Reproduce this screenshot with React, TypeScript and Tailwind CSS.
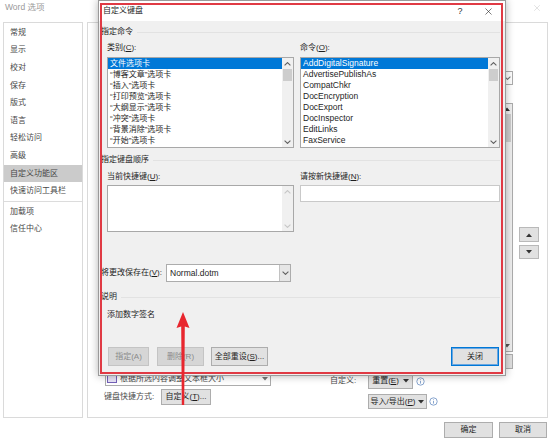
import React from "react";
import { X } from "lucide-react";

const ChevUp = ({ c = "#606060" }: { c?: string }) => (
  <svg width="7" height="4" viewBox="0 0 7 4">
    <polyline points="0.6,3.4 3.5,0.6 6.4,3.4" fill="none" stroke={c} strokeWidth="1.1" />
  </svg>
);
const ChevDown = ({ c = "#606060" }: { c?: string }) => (
  <svg width="7" height="4" viewBox="0 0 7 4">
    <polyline points="0.6,0.6 3.5,3.4 6.4,0.6" fill="none" stroke={c} strokeWidth="1.1" />
  </svg>
);
const TriUp = () => (
  <svg width="6" height="4" viewBox="0 0 6 4">
    <polygon points="0,4 3,0.5 6,4" fill="#333" />
  </svg>
);
const TriDown = ({ c = "#333" }: { c?: string }) => (
  <svg width="6" height="4" viewBox="0 0 6 4">
    <polygon points="0,0 6,0 3,3.5" fill={c} />
  </svg>
);
const Info = () => (
  <svg width="9" height="9" viewBox="0 0 9 9">
    <circle cx="4.5" cy="4.5" r="3.7" fill="none" stroke="#7b9bc8" strokeWidth="0.9" />
    <line x1="4.5" y1="4" x2="4.5" y2="6.6" stroke="#7b9bc8" strokeWidth="0.9" />
    <circle cx="4.5" cy="2.7" r="0.5" fill="#7b9bc8" />
  </svg>
);

function VScroll({ thumb, disabled }: { thumb?: boolean; disabled?: boolean }) {
  const c = disabled ? "#c6c6c6" : "#606060";
  return (
    <div className="w-[11px] h-full flex flex-col bg-[#f0f0f0] shrink-0">
      <div className="h-[11px] flex items-center justify-center">
        <ChevUp c={c} />
      </div>
      {thumb ? <div className="mx-[1px] h-[12px] bg-[#cdcdcd]" /> : null}
      <div className="flex-1" />
      <div className="h-[11px] flex items-center justify-center">
        <ChevDown c={c} />
      </div>
    </div>
  );
}

const cats = [
  "文件选项卡",
  "“博客文章”选项卡",
  "“插入”选项卡",
  "“打印预览”选项卡",
  "“大纲显示”选项卡",
  "“冲突”选项卡",
  "“背景消除”选项卡",
  "“开始”选项卡",
];
const cmds = [
  "AddDigitalSignature",
  "AdvertisePublishAs",
  "CompatChkr",
  "DocEncryption",
  "DocExport",
  "DocInspector",
  "EditLinks",
  "FaxService",
];

function ListBox({ items, latin }: { items: string[]; latin?: boolean }) {
  return (
    <div className="h-full bg-white border border-[#a8a8a8] flex">
      <div className={`flex-1 flex flex-col ${latin ? "text-[8.5px]" : ""}`}>
        {items.map((t, i) => (
          <div
            key={t}
            className={`h-[11px] shrink-0 flex items-center pl-[2px] whitespace-nowrap ${
              i === 0 ? "bg-[#0078d7] text-white" : ""
            }`}
          >
            {t}
          </div>
        ))}
      </div>
      <VScroll thumb />
    </div>
  );
}

function Header({ t, cls }: { t: string; cls: string }) {
  return (
    <div className={`flex items-center h-[12px] ${cls}`}>
      <span>{t}</span>
      <div className="flex-1 h-px bg-[#e2e2e2] ml-[4px]" />
    </div>
  );
}

function WinBtn({ children, cls, disabled }: { children?: React.ReactNode; cls: string; disabled?: boolean }) {
  return (
    <div
      className={`flex items-center justify-center border whitespace-nowrap ${
        disabled ? "bg-[#d6d6d6] border-[#c4c4c4] text-[#8a8a8a]" : "bg-[#e1e1e1] border-[#adadad] text-[#1e1e1e]"
      } ${cls}`}
    >
      {children}
    </div>
  );
}

function Dialog() {
  return (
    <div className="absolute left-[98px] top-0 w-[408px] h-[376px] border border-[#9a9a9a] bg-[#f0f0f0] shadow-[0_0_8px_rgba(0,0,0,0.3)] flex flex-col">
      <div className="h-[20px] bg-white flex items-center pl-[4px] pr-[10px] shrink-0">
        <span className="text-[#1e1e1e]">自定义键盘</span>
        <span className="ml-auto w-[14px] text-center text-[9px] text-[#333]">?</span>
        <div className="ml-[14px] w-[14px] flex items-center justify-center">
          <X size={11} strokeWidth={1.3} color="#222" />
        </div>
      </div>
      <div className="flex-1 flex flex-col pl-[2px] pr-[5px]">
        <Header t="指定命令" cls="mt-[5px]" />
        <div className="ml-[6px] mt-[4px] h-[12px] grid grid-cols-[187px_200px] gap-x-[6px] items-center">
          <span>
            类别(<u>C</u>):
          </span>
          <span>
            命令(<u>O</u>):
          </span>
        </div>
        <div className="ml-[6px] mt-[3px] h-[91px] grid grid-cols-[187px_200px] gap-x-[6px]">
          <ListBox items={cats} />
          <ListBox items={cmds} latin />
        </div>
        <Header t="指定键盘顺序" cls="mt-[6px]" />
        <div className="ml-[6px] mt-[5px] h-[12px] grid grid-cols-[187px_200px] gap-x-[6px] items-center">
          <span>
            当前快捷键(<u>U</u>):
          </span>
          <span>
            请按新快捷键(<u>N</u>):
          </span>
        </div>
        <div className="ml-[6px] mt-[2px] grid grid-cols-[187px_200px] gap-x-[6px] items-start">
          <div className="h-[47px] bg-white border border-[#a8a8a8] flex justify-end">
            <VScroll disabled />
          </div>
          <div className="h-[17px] bg-white border border-[#c9c9c9]" />
        </div>
        <div className="mt-[32px] h-[18px] flex items-center">
          <span className="w-[65px] whitespace-nowrap">
            将更改保存在(<u>V</u>):
          </span>
          <div className="w-[125px] h-full bg-white border border-[#acacac] flex">
            <div className="flex-1 flex items-center pl-[3px] text-[8.5px]">Normal.dotm</div>
            <div className="w-[11px] bg-[#e6e6e6] border-l border-[#c2c2c2] flex items-center justify-center">
              <ChevDown />
            </div>
          </div>
        </div>
        <Header t="说明" cls="mt-[9px]" />
        <div className="ml-[6px] mt-[6px] h-[12px] flex items-center">添加数字签名</div>
        <div className="mt-[26px] h-[19px] flex ml-[7px] mr-[1px]">
          <WinBtn cls="w-[41px]" disabled>
            指定(A)
          </WinBtn>
          <WinBtn cls="w-[47px] ml-[8px]" disabled>
            删除(R)
          </WinBtn>
          <WinBtn cls="w-[57px] ml-[7px]">
            全部重设(<u>S</u>)...
          </WinBtn>
          <div className="ml-auto w-[48px] flex items-center justify-center bg-[#e1e1e1] border border-[#0078d7] shadow-[inset_0_0_0_1px_#6aa6e0]">
            关闭
          </div>
        </div>
      </div>
    </div>
  );
}

const side = ["常规", "显示", "校对", "保存", "版式", "语言", "轻松访问", "高级", "自定义功能区", "快速访问工具栏"];

function Sidebar() {
  return (
    <div className="w-[80px] border border-[#dadada] pt-[1px] flex flex-col text-[#474747] shrink-0">
      {side.map((t) => (
        <div
          key={t}
          className={`h-[17.6px] flex items-center pl-[6px] whitespace-nowrap ${
            t === "自定义功能区" ? "bg-[#cbcbcb]" : ""
          }`}
        >
          {t}
        </div>
      ))}
      <div className="h-[3px] flex items-center">
        <div className="w-full h-px bg-[#dcdcdc]" />
      </div>
      <div className="h-[17.6px] flex items-center pl-[6px]">加载项</div>
      <div className="h-[17.6px] flex items-center pl-[6px]">信任中心</div>
    </div>
  );
}

function Main() {
  return (
    <div className="flex-1 border border-[#dadada] flex items-start pl-[17px] text-[#4a4a4a]">
      <div className="w-[166px] flex flex-col">
        <div className="mt-[48px] h-[14px] bg-white border border-[#acacac]" />
        <div className="mt-[18px] h-[283px] bg-white border border-[#acacac] flex">
          <div className="flex-1 flex flex-col justify-end">
            <div className="h-[13px] flex items-center gap-[3px] pl-[1px] whitespace-nowrap overflow-hidden">
              <div className="w-[10px] h-[8px] border border-[#7360b8] bg-[#e8e4f7] shrink-0" />
              <span>根据所选内容调整文本框大小</span>
            </div>
          </div>
          <div className="w-[10px] flex flex-col justify-end items-center pb-[4px]">
            <TriDown c="#777" />
          </div>
        </div>
        <div className="mt-[3px] h-[16px] flex items-center ml-[-1px]">
          <span className="w-[57px] whitespace-nowrap">键盘快捷方式:</span>
          <WinBtn cls="w-[50px] h-[16px]">
            自定义(<u>T</u>)...
          </WinBtn>
        </div>
      </div>
      <div className="ml-[59px] w-[183px] flex flex-col">
        <div className="mt-[48px] h-[14px] bg-white border border-[#acacac] flex justify-end">
          <div className="w-[10px] flex items-center justify-center">
            <ChevDown c="#777" />
          </div>
        </div>
        <div className="mt-[18px] h-[249px] bg-white border border-[#acacac] flex justify-end">
          <div className="w-[10px] flex flex-col bg-[#f0f0f0]">
            <div className="h-[10px] flex items-center justify-center">
              <TriUp />
            </div>
            <div className="h-[28px] mx-[1px] bg-[#cdcdcd]" />
            <div className="flex-1" />
            <div className="h-[10px] flex items-center justify-center">
              <TriDown c="#555" />
            </div>
          </div>
        </div>
        <div className="mt-[2px] h-[15px] flex justify-end gap-[5px]">
          <WinBtn cls="w-[50px]" />
          <WinBtn cls="w-[40px]" />
          <WinBtn cls="w-[40px]" />
        </div>
        <div className="mt-[4px] h-[16px] flex items-center">
          <span className="w-[26px] text-right whitespace-nowrap">自定义:</span>
          <WinBtn cls="ml-[12px] w-[45px] h-[16px] gap-[4px]">
            <span>
              重置(<u>E</u>)
            </span>
            <TriDown />
          </WinBtn>
          <div className="ml-[3px] flex items-center">
            <Info />
          </div>
        </div>
        <div className="mt-[5px] h-[15px] flex items-center pl-[38px]">
          <WinBtn cls="w-[59px] h-[15px] gap-[3px]">
            <span>
              导入/导出(<u>P</u>)
            </span>
            <TriDown />
          </WinBtn>
          <div className="ml-[2px] flex items-center">
            <Info />
          </div>
        </div>
      </div>
      <div className="ml-[6px] mt-[204px] w-[20px] flex flex-col gap-[3px]">
        <div className="h-[15px] bg-[#e1e1e1] border border-[#b9b9b9] flex items-center justify-center">
          <TriUp />
        </div>
        <div className="h-[14px] bg-[#e1e1e1] border border-[#b9b9b9] flex items-center justify-center">
          <TriDown />
        </div>
      </div>
    </div>
  );
}

export default function App() {
  return (
    <div className="relative w-[554px] h-[443px] overflow-hidden bg-white font-['Liberation_Sans','Noto_Sans_CJK_SC',sans-serif] text-[8px] leading-none text-[#1e1e1e]">
      <div className="flex flex-col h-full">
        <div className="h-[22px] flex items-start justify-between pt-[3px] pl-[5px] pr-[12px]">
          <span className="text-[#9a9a9a] text-[8.5px]">Word 选项</span>
          <X size={10} color="#c4c4c4" strokeWidth={1.2} />
        </div>
        <div className="flex pl-[3px] pr-[6px] gap-[4px] h-[396px]">
          <Sidebar />
          <Main />
        </div>
        <div className="flex justify-end gap-[6px] pr-[7px] pt-[4px]">
          <WinBtn cls="w-[49px] h-[16px]">确定</WinBtn>
          <WinBtn cls="w-[48px] h-[16px]">取消</WinBtn>
        </div>
      </div>
      <Dialog />
      <div className="absolute left-[100px] top-[3px] w-[403px] h-[371px] border-2 border-[#e03a44] pointer-events-none" />
      <svg className="absolute left-[175px] top-[310px] pointer-events-none" width="16" height="96" viewBox="0 0 16 96">
        <polygon
          points="8,2 14.5,18 9.8,16.5 9.2,95 6.8,95 6.2,16.5 1.5,18"
          fill="#e8262e"
        />
      </svg>
    </div>
  );
}
